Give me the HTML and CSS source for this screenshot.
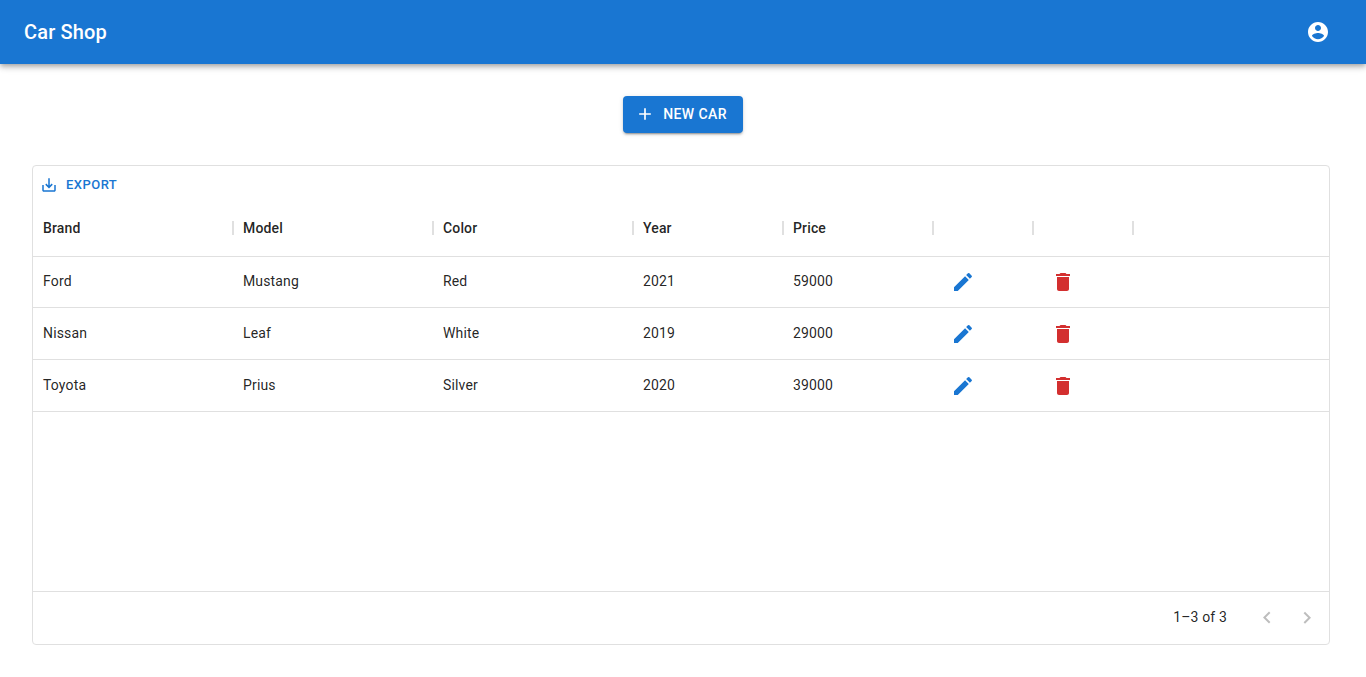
FILE: index.html
```html
<!DOCTYPE html>
<html lang="en">
<head>
<meta charset="utf-8">
<title>Car Shop</title>
<link rel="stylesheet" href="styles.css">
</head>
<body>
<header class="appbar">
  <h1 class="title">Car Shop</h1>
  <svg class="icon account" viewBox="0 0 24 24"><path d="M12 2C6.48 2 2 6.48 2 12s4.48 10 10 10 10-4.480 10-10S17.520 2 12 2zm0 3c1.660 0 3 1.340 3 3s-1.340 3-3 3-3-1.340-3-3 1.340-3 3-3zm0 14.200c-2.500 0-4.710-1.280-6-3.220.030-1.990 4-3.080 6-3.080 1.990 0 5.970 1.090 6 3.080-1.290 1.940-3.500 3.220-6 3.220z"/></svg>
</header>
<main class="content">
  <button class="new-car"><svg class="icon-sm" viewBox="0 0 24 24"><path d="M19 13h-6v6h-2v-6H5v-2h6V5h2v6h6v2z"/></svg>NEW CAR</button>
  <section class="grid">
    <div class="toolbar">
      <button class="export"><svg class="icon-export" viewBox="0 0 24 24"><path d="M19 12v7H5v-7H3v7c0 1.100.9 2 2 2h14c1.100 0 2-.9 2-2v-7h-2zm-6 .670l2.590-2.580L17 11.500l-5 5-5-5 1.410-1.410L11 12.670V3h2z"/></svg>EXPORT</button>
    </div>
    <div class="row head">
      <div class="cell">Brand</div><div class="cell">Model</div><div class="cell">Color</div><div class="cell">Year</div><div class="cell">Price</div><div class="cell"></div><div class="cell"></div>
    </div>
    <div class="body">
      <div class="row first">
        <div class="cell">Ford</div><div class="cell">Mustang</div><div class="cell">Red</div><div class="cell">2021</div><div class="cell">59000</div>
        <div class="cell action"><svg class="icon edit" viewBox="0 0 24 24"><path d="M3 17.250V21h3.750L17.810 9.940l-3.750-3.750L3 17.250zM20.710 7.040c.390-.390.390-1.020 0-1.410l-2.340-2.340a.9959.9959 0 0 0-1.410 0l-1.830 1.830 3.750 3.750 1.830-1.830z"/></svg></div>
        <div class="cell action"><svg class="icon delete" viewBox="0 0 24 24"><path d="M6 19c0 1.100.9 2 2 2h8c1.100 0 2-.9 2-2V7H6v12zM19 4h-3.500l-1-1h-5l-1 1H5v2h14V4z"/></svg></div>
      </div>
      <div class="row">
        <div class="cell">Nissan</div><div class="cell">Leaf</div><div class="cell">White</div><div class="cell">2019</div><div class="cell">29000</div>
        <div class="cell action"><svg class="icon edit" viewBox="0 0 24 24"><path d="M3 17.250V21h3.750L17.810 9.940l-3.750-3.750L3 17.250zM20.710 7.040c.390-.390.390-1.020 0-1.410l-2.340-2.340a.9959.9959 0 0 0-1.410 0l-1.830 1.830 3.750 3.750 1.830-1.830z"/></svg></div>
        <div class="cell action"><svg class="icon delete" viewBox="0 0 24 24"><path d="M6 19c0 1.100.9 2 2 2h8c1.100 0 2-.9 2-2V7H6v12zM19 4h-3.500l-1-1h-5l-1 1H5v2h14V4z"/></svg></div>
      </div>
      <div class="row">
        <div class="cell">Toyota</div><div class="cell">Prius</div><div class="cell">Silver</div><div class="cell">2020</div><div class="cell">39000</div>
        <div class="cell action"><svg class="icon edit" viewBox="0 0 24 24"><path d="M3 17.250V21h3.750L17.810 9.940l-3.750-3.750L3 17.250zM20.710 7.040c.390-.390.390-1.020 0-1.410l-2.340-2.340a.9959.9959 0 0 0-1.410 0l-1.830 1.830 3.750 3.750 1.830-1.830z"/></svg></div>
        <div class="cell action"><svg class="icon delete" viewBox="0 0 24 24"><path d="M6 19c0 1.100.9 2 2 2h8c1.100 0 2-.9 2-2V7H6v12zM19 4h-3.500l-1-1h-5l-1 1H5v2h14V4z"/></svg></div>
      </div>
    </div>
    <footer class="footer">
      <span class="range">1–3 of 3</span>
      <svg class="icon arrow" viewBox="0 0 24 24"><path d="M15.410 16.090l-4.580-4.590 4.580-4.590L14 5.500l-6 6 6 6z"/></svg>
      <svg class="icon arrow" viewBox="0 0 24 24"><path d="M8.590 16.340l4.580-4.590-4.580-4.590L10 5.750l6 6-6 6z"/></svg>
    </footer>
  </section>
</main>
</body>
</html>
```
FILE: styles.css
```css
* { box-sizing: border-box; }
body { margin: 0; font-family: Roboto, "Liberation Sans", sans-serif; color: rgba(0,0,0,.87); background: #fff; -webkit-font-smoothing: antialiased; }
button { border: 0; font-family: inherit; font-weight: 500; }
svg { fill: currentColor; flex-shrink: 0; }
.icon { width: 24px; height: 24px; }
.appbar { display: flex; align-items: center; justify-content: space-between; height: 64px; padding: 0 36px 0 24px; background: #1976d2; color: #fff; box-shadow: 0 2px 4px -1px rgba(0,0,0,.2), 0 4px 5px 0 rgba(0,0,0,.14), 0 1px 10px 0 rgba(0,0,0,.12); }
.title { margin: 0; font-size: 20px; font-weight: 500; line-height: 32px; letter-spacing: .15px; }
.content { display: flex; flex-direction: column; align-items: center; padding: 32px 36px 0 32px; }
.new-car { display: flex; align-items: center; gap: 8px; height: 36.500px; padding: 6px 16px 6px 12px; margin-left: 4px; border-radius: 4px; background: #1976d2; color: #fff; font-size: 14px; line-height: 24.500px; letter-spacing: .4px; box-shadow: 0 3px 1px -2px rgba(0,0,0,.2), 0 2px 2px 0 rgba(0,0,0,.14), 0 1px 5px 0 rgba(0,0,0,.12); }
.icon-sm { width: 20px; height: 20px; }
.grid { display: flex; flex-direction: column; width: 100%; height: 480px; margin-top: 32.500px; border: 1px solid #e0e0e0; border-radius: 4px; font-size: 14px; letter-spacing: .15px; }
.toolbar { padding: 3px 4px 0; height: 35px; }
.export { display: flex; align-items: center; gap: 8px; height: 31px; padding: 4px 5px 4px 3px; background: none; color: #1976d2; font-size: 13px; letter-spacing: .46px; }
.icon-export { width: 18px; height: 18px; }
.row { display: grid; grid-template-columns: 200px 200px 200px 150px 150px 100px 100px 1fr; height: 52px; border-bottom: 1px solid #e0e0e0; align-items: center; }
.cell { padding: 0 10px 2px; line-height: 20px; }
.head { height: 56px; padding-bottom: 2px; font-weight: 500; }
.head .cell { position: relative; height: 20px; padding-bottom: 0; }
.head .cell::after { content: ""; position: absolute; right: -1px; top: 3px; width: 2px; height: 14px; background: #e0e0e0; }
.first { height: 51px; }
.action { padding: 0 0 0 18px; display: flex; }
.body { flex: 1; }
.edit { color: #1976d2; }
.delete { color: #d32f2f; }
.footer { display: flex; align-items: center; height: 53px; border-top: 1px solid #e0e0e0; padding-right: 10px; }
.range { margin-left: auto; margin-right: 28px; padding-bottom: 2px; }
.arrow { color: rgba(0,0,0,.26); }
.arrow + .arrow { margin-left: 16px; }
```
